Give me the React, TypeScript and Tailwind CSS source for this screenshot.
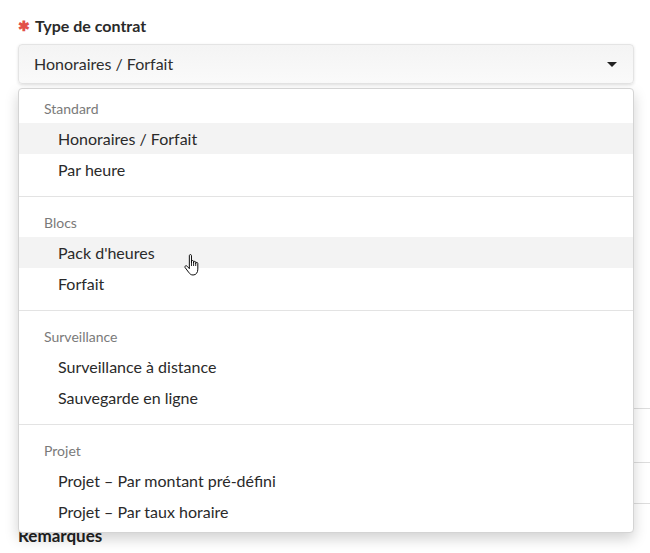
import React from 'react'

const groups = [
  { label: 'Standard', options: ['Honoraires / Forfait', 'Par heure'] },
  { label: 'Blocs', options: ["Pack d'heures", 'Forfait'] },
  { label: 'Surveillance', options: ['Surveillance à distance', 'Sauvegarde en ligne'] },
  { label: 'Projet', options: ['Projet – Par montant pré-défini', 'Projet – Par taux horaire'] },
]

const highlighted = ['Honoraires / Forfait', "Pack d'heures"]

function HandCursor() {
  return (
    <svg width="18" height="26" viewBox="0 0 17 22" className="absolute left-[183px] top-[253px]">
      <path
        d="M6 1.2c0-.6.5-1 1-1s1 .4 1 1V8V6.8c0-.6.5-1 1-1s1 .4 1 1V8.5V7.6c0-.6.5-1 1-1s1 .4 1 1V9V8.6c0-.6.5-1 1-1s1 .4 1 1V14c0 3-1.5 5.5-4.5 5.5H9.5c-2 0-3-1-4.2-2.6L2 12.5c-.4-.6-.2-1.3.4-1.6.6-.3 1.2-.1 1.6.4L6 13.5V1.2z"
        fill="#fff"
        stroke="#000"
        strokeWidth="0.9"
        strokeLinejoin="round"
      />
      <path d="M8 8v3M10 8.5v2.5M12 9v2" stroke="#000" strokeWidth="0.8" />
    </svg>
  )
}

export default function App() {
  return (
    <div className="relative min-h-[553px] w-[650px] overflow-hidden bg-white pl-[18px] pr-[16px] pt-[16px] font-['Lato',sans-serif] text-[#333]">
      {/* label */}
      <div className="flex h-5 items-center gap-[5px] text-[16px] font-bold leading-5 text-[#2a2a2a]">
        <span className="text-[14px] text-[#e2504a]">✱</span>
        <span>Type de contrat</span>
      </div>

      {/* select */}
      <div className="mt-2 flex h-10 items-center justify-between rounded-[4px] border border-[#e4e4e4] bg-gradient-to-b from-[#f4f4f4] to-[#fafafa] pl-[15px] pr-[16px] text-[16px] text-[#2e2e2e] shadow-[0_1px_3px_rgba(0,0,0,0.12)]">
        <span>Honoraires / Forfait</span>
        <svg width="10" height="5" viewBox="0 0 10 5">
          <path d="M0 0h10L5 5z" fill="#222" />
        </svg>
      </div>

      {/* form fields beneath the open menu */}
      <div className="mt-[36px] h-5" />
      <div className="mt-1 h-[46px] rounded-[4px] border border-[#ccc]" />
      <div className="mt-[126px] h-5" />
      <div className="mt-1 h-[36px] rounded-[4px] border border-[#ccc]" />
      <div className="mr-[-20px] mt-[32px] flex flex-col">
        <div className="h-[55px] border-y border-[#ddd]" />
        <div className="h-[41px] border-b border-[#ddd]" />
      </div>
      <div className="mt-[22px] text-[17px] font-bold leading-5 text-[#222]">Remarques</div>

      {/* open menu */}
      <div className="absolute left-[18px] top-[88px] w-[616px] rounded-[4px] border border-[#d4d4d4] bg-white py-[5px] shadow-[0_6px_14px_rgba(0,0,0,0.18)]">
        {groups.map((g, i) => (
          <div key={g.label}>
            {i > 0 && <div className="my-[11px] h-px bg-[#e3e3e3]" />}
            <div className="flex h-[29px] items-center pl-[25px] text-[14px] text-[#7a7a7a]">{g.label}</div>
            {g.options.map((o) => (
              <div
                key={o}
                className={`flex h-[31px] items-center pl-[39px] text-[16px] text-[#2a2a2a] ${
                  highlighted.includes(o) ? 'bg-[#f3f3f3]' : ''
                }`}
              >
                {o}
              </div>
            ))}
          </div>
        ))}
      </div>

      <HandCursor />
    </div>
  )
}
